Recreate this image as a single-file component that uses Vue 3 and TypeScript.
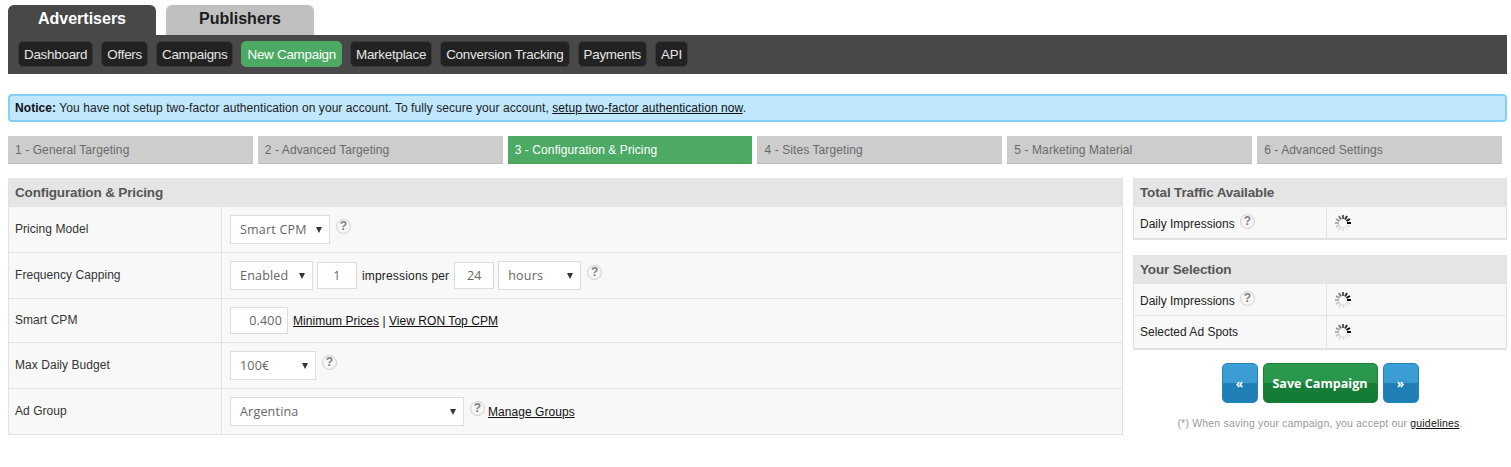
<script setup lang="ts">
const navItems = ['Dashboard', 'Offers', 'Campaigns', 'New Campaign', 'Marketplace', 'Conversion Tracking', 'Payments', 'API']
const steps = ['1 - General Targeting', '2 - Advanced Targeting', '3 - Configuration & Pricing', '4 - Sites Targeting', '5 - Marketing Material', '6 - Advanced Settings']
const spokes = Array.from({ length: 12 }, (_, i) => i)
const spokeOpacity = (i: number) => [0.62, 0.8, 0.95, 1, 0.1, 0.06, 0.08, 0.12, 0.2, 0.28, 0.38, 0.5][i]
</script>

<template>
  <div class="page">
    <div class="tabs">
      <div class="tab tab-on">Advertisers</div>
      <div class="tab tab-off">Publishers</div>
    </div>
    <nav class="bar">
      <a v-for="n in navItems" :key="n" class="nav" :class="{ 'nav-on': n === 'New Campaign' }">{{ n }}</a>
    </nav>

    <div class="notice"><b>Notice:</b> You have not setup two-factor authentication on your account. To fully secure your account, <a>setup two-factor authentication now</a>.</div>

    <div class="steps">
      <div v-for="s in steps" :key="s" class="step" :class="{ 'step-on': s.startsWith('3') }">{{ s }}</div>
    </div>

    <div class="main">
      <section class="panel left">
        <h3>Configuration &amp; Pricing</h3>
        <div class="row r46">
          <div class="lab">Pricing Model</div>
          <div class="val">
            <div class="sel w100"><select><option>Smart CPM</option></select><i></i></div>
            <span class="help">?</span>
          </div>
        </div>
        <div class="row r46">
          <div class="lab">Frequency Capping</div>
          <div class="val">
            <div class="sel w83"><select><option>Enabled</option></select><i></i></div>
            <input class="num w40 center tuck" value="1" />
            <span class="txt wide">impressions per</span>
            <input class="num w40 center" value="24" />
            <div class="sel w83 tuck"><select><option>hours</option></select><i></i></div>
            <span class="help">?</span>
          </div>
        </div>
        <div class="row r44">
          <div class="lab">Smart CPM</div>
          <div class="val">
            <input class="num w58 right" value="0.400" />
            <span class="txt"><a>Minimum Prices</a> | <a>View RON Top CPM</a></span>
          </div>
        </div>
        <div class="row r46">
          <div class="lab">Max Daily Budget</div>
          <div class="val">
            <div class="sel w86"><select><option>100€</option></select><i></i></div>
            <span class="help">?</span>
          </div>
        </div>
        <div class="row r46 last">
          <div class="lab">Ad Group</div>
          <div class="val">
            <div class="sel w234"><select><option>Argentina</option></select><i></i></div>
            <span class="help">?</span>
            <span class="txt pull"><a>Manage Groups</a></span>
          </div>
        </div>
      </section>

      <aside class="side">
        <section class="panel">
          <h3>Total Traffic Available</h3>
          <div class="srow h32">
            <div class="slab">Daily Impressions <span class="help small">?</span></div>
            <div class="sval">
              <svg class="spin" viewBox="0 0 20 20" width="20" height="20"><line v-for="i in spokes" :key="i" x1="10" y1="2" x2="10" y2="6" :transform="`rotate(${i * 30} 10 10)`" :opacity="spokeOpacity(i)" /></svg>
            </div>
          </div>
        </section>
        <section class="panel">
          <h3>Your Selection</h3>
          <div class="srow h32">
            <div class="slab">Daily Impressions <span class="help small">?</span></div>
            <div class="sval">
              <svg class="spin" viewBox="0 0 20 20" width="20" height="20"><line v-for="i in spokes" :key="i" x1="10" y1="2" x2="10" y2="6" :transform="`rotate(${i * 30} 10 10)`" :opacity="spokeOpacity(i)" /></svg>
            </div>
          </div>
          <div class="srow h33">
            <div class="slab tight">Selected Ad Spots</div>
            <div class="sval">
              <svg class="spin" viewBox="0 0 20 20" width="20" height="20"><line v-for="i in spokes" :key="i" x1="10" y1="2" x2="10" y2="6" :transform="`rotate(${i * 30} 10 10)`" :opacity="spokeOpacity(i)" /></svg>
            </div>
          </div>
        </section>
        <div class="actions">
          <button class="btn blue">«</button>
          <button class="btn green">Save Campaign</button>
          <button class="btn blue">»</button>
        </div>
        <p class="foot">(*) When saving your campaign, you accept our <a>guidelines</a>.</p>
      </aside>
    </div>
  </div>
</template>

<style>
html, body { margin: 0; background: #fff; }
</style>

<style scoped>
.page { box-sizing: border-box; width: 1511px; height: 467px; padding: 5px 4px 0 8px; font: 12px "Liberation Sans", Arial, sans-serif; color: #222; overflow: hidden; }
a { color: #111; text-decoration: underline; }
.tabs { display: flex; gap: 10px; height: 30px; }
.tab { width: 148px; border-radius: 6px 6px 0 0; text-align: center; font-weight: 700; font-size: 16px; line-height: 27px; }
.tab-on { background: #484848; color: #fff; }
.tab-off { background: #c0c0c0; color: #1c1c1c; }
.bar { display: flex; gap: 8px; height: 39px; box-sizing: border-box; padding: 6px 10px; background: #484848; }
.nav { box-sizing: border-box; height: 26px; padding: 0 5px; line-height: 25px; font-size: 13.4px; letter-spacing: -0.25px; color: #e6e6e6; background: #222; border: 1px solid #3a3a3a; border-radius: 5px; text-decoration: none; }
.nav-on { background: #4caa64; color: #fff; border-color: #4caa64; }
.notice { box-sizing: border-box; height: 28px; margin-top: 20px; padding: 0 5px; line-height: 25px; background: #bfe7fd; border: 2px solid #85d0f8; border-radius: 4px; color: #222; font-size: 12px; letter-spacing: 0.065px; }
.notice b { color: #111; }
.steps { display: grid; grid-template-columns: repeat(6, 1fr); gap: 5px; width: 1494px; margin-top: 14px; }
.step { box-sizing: border-box; height: 28px; padding: 0 7px; line-height: 28px; background: #cdcdcd; color: #6a6a6a; font-size: 12px; letter-spacing: 0.09px; border-bottom: 1px solid #bdbdbd; }
.step-on { background: #4caa64; color: #fff; border-bottom-color: #46a05c; }
.main { display: flex; gap: 10px; margin-top: 14px; align-items: flex-start; }
.panel { background: #f8f8f8; border: 1px solid #e2e2e2; border-top: 0; }
.panel h3 { margin: 0; box-sizing: border-box; height: 29px; padding: 0 6px; font-size: 13.5px; line-height: 29px; font-weight: 700; color: #555; background: #e5e5e5; letter-spacing: -0.15px; }
.left { width: 1115px; box-sizing: border-box; }
.row { display: flex; border-bottom: 1px solid #e2e2e2; box-sizing: border-box; }
.r46 { height: 46px; }
.r44 { height: 44px; }
.last { height: 45px; border-bottom: 0; }
.lab { box-sizing: border-box; width: 213px; padding: 0 6px 2px; display: flex; align-items: center; border-right: 1px solid #e2e2e2; color: #333; letter-spacing: 0.05px; }
.val { display: flex; align-items: center; padding: 0 0 0 8px; gap: 5px; }
.tuck { margin-left: -1px; }
.pull { margin-left: -2px; letter-spacing: 0.1px; }
.sel { position: relative; box-sizing: border-box; height: 29px; background: #fff; border: 1px solid #ddd; }
.sel select { appearance: none; width: 100%; height: 100%; border: 0; padding: 0 0 0 9px; background: transparent; font: 12.5px "Open Sans", sans-serif; color: #666; letter-spacing: 0.2px; outline: 0; }
.sel i { position: absolute; right: 7px; top: 11px; width: 0; height: 0; border: 3px solid transparent; border-top: 6px solid #333; border-bottom: 0; pointer-events: none; }
.w100 { width: 100px; }
.w83 { width: 83px; }
.w86 { width: 86px; }
.w234 { width: 234px; }
.num { box-sizing: border-box; height: 27px; background: #fff; border: 1px solid #ddd; font: 12.5px "Open Sans", sans-serif; color: #666; letter-spacing: 0.2px; outline: 0; }
.w40 { width: 40px; }
.w58 { width: 58px; }
.center { text-align: center; padding: 0; }
.right { text-align: right; padding: 0 5px 0 0; }
.txt { color: #222; font-size: 12px; letter-spacing: 0.05px; }
.wide { letter-spacing: 0.17px; }
.help { display: inline-block; box-sizing: border-box; width: 15px; height: 15px; margin: -6px 0 0 1px; align-self: center; border-radius: 50%; border: 1px solid #cfcfcf; background: #f6f6f6; color: #808080; font: 700 12px/13px "Liberation Sans", sans-serif; text-align: center; }
.help.small { margin: 0 0 0 2px; vertical-align: 3px; }
.side { width: 374px; display: flex; flex-direction: column; gap: 15px; }
.srow { display: flex; border-bottom: 1px solid #e2e2e2; box-sizing: border-box; }
.h32 { height: 32px; }
.h33 { height: 33px; }
.slab { box-sizing: border-box; width: 193px; padding: 2px 6px 0; line-height: 30px; border-right: 1px solid #e2e2e2; color: #222; white-space: nowrap; }
.tight { padding-top: 1px; }
.sval { display: flex; align-items: center; padding: 0 0 0 6px; }
.spin line { stroke: #000; stroke-width: 2; }
.actions { display: flex; justify-content: center; gap: 5px; margin-top: -2px; }
.btn { height: 40px; border-radius: 5px; color: #fff; font-weight: 700; cursor: pointer; padding: 0; }
.blue { width: 36px; border: 1px solid #2683b8; background: linear-gradient(#3a9fd5 0, #3a9bd0 50%, #1f80b5 50%, #1f7fb4 100%); font: 700 12px "Open Sans", sans-serif; }
.green { width: 115px; border: 1px solid #188038; background: linear-gradient(#2b9a4f 0, #28954a 50%, #167f38 50%, #137a33 100%); font: 700 12.6px "Open Sans", sans-serif; }
.foot { margin: -1px 0 0; text-align: center; font-size: 10.5px; color: #999; letter-spacing: 0.19px; }
</style>
